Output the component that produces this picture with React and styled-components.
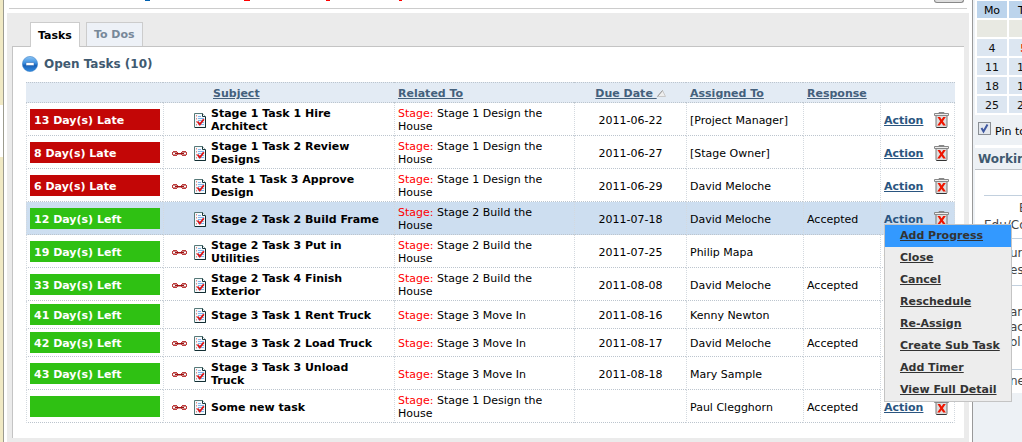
import React from "react";
import styled, { createGlobalStyle } from "styled-components";

const GlobalStyle = createGlobalStyle`
  * {
    box-sizing: border-box;
  }
  body {
    margin: 0;
    background: #ffffff;
    font-family: Verdana, "DejaVu Sans", sans-serif;
    font-size: 11px;
    line-height: 13px;
    color: #000000;
  }
`;

const StyledPage = styled.div`
  display: flex;
  min-height: 100vh;
  overflow: hidden;
`;

const StyledGutter = styled.div`
  display: flex;
  flex-direction: column;
  flex: none;
  width: 4px;
  border-right: 1px solid #9c9c90;
`;

const StyledGutterBlock = styled.div`
  height: ${({ $height }) => $height || "auto"};
  flex: ${({ $height }) => ($height ? "none" : "1")};
  background: ${({ $blank }) => ($blank ? "#ffffff" : "#f0e9c4")};
`;

const StyledMain = styled.main`
  flex: 1;
  min-width: 0;
`;

const StyledTopBar = styled.header`
  display: flex;
  justify-content: space-between;
  height: 9px;
  margin: 0 5px 4px;
  border-bottom: 1px solid #cccccc;
`;

const StyledMarks = styled.svg`
  width: 400px;
  height: 3px;
`;

const StyledTopButton = styled.button`
  width: 30px;
  height: 3px;
  margin-right: 3px;
  padding: 0;
  border: 1px solid #888888;
  border-top: none;
  border-radius: 0 0 3px 3px;
  background: #dddddd;
`;

const StyledFrame = styled.section`
  margin: 0 3px;
  padding: 9px 5px 4px;
  background: #ebebeb;
`;

const StyledTabs = styled.div`
  display: flex;
  gap: 6px;
  padding-left: 18px;
`;

const StyledTab = styled.button`
  height: ${({ $active }) => ($active ? "25px" : "24px")};
  margin-bottom: ${({ $active }) => ($active ? "-1px" : "0")};
  padding: 0 7px;
  border: 1px solid #cccccc;
  border-bottom: none;
  background: ${({ $active }) => ($active ? "#ffffff" : "#edf1f7")};
  color: ${({ $active }) => ($active ? "#000000" : "#778899")};
  font-family: inherit;
  font-size: 11px;
  font-weight: bold;
`;

const StyledPanel = styled.div`
  padding: 9px 9px 15px;
  border-top: 1px solid #c4c4c4;
  border-left: 1px solid #c4c4c4;
  background: #ffffff;
`;

const StyledPanelTitle = styled.h2`
  display: flex;
  align-items: center;
  gap: 6px;
  height: 16px;
  margin: 0 0 10px;
  color: #3f5a70;
  font-size: 12px;
  font-weight: bold;
`;

const StyledTableBox = styled.div`
  padding-left: 4px;
`;

const StyledTable = styled.table`
  width: 100%;
  table-layout: fixed;
  border-collapse: separate;
  border-spacing: 0;
`;

const StyledTh = styled.th`
  width: ${({ $width }) => $width || "auto"};
  height: 21px;
  padding: 2px 3px 0 ${({ $indent }) => $indent || "4px"};
  border-top: 1px dotted #bcc5ce;
  border-bottom: 1px dotted #bcc5ce;
  background: #e3ebf4;
  text-align: ${({ $align }) => $align || "left"};
  white-space: nowrap;
`;

const StyledSortLink = styled.a`
  color: #44607c;
  font-weight: bold;
`;

const StyledRow = styled.tr`
  background: ${({ $selected }) => ($selected ? "#cddef0" : "#ffffff")};
`;

const StyledTd = styled.td`
  padding: 4px 3px 2px;
  border-left: 1px dotted #d3d9df;
  border-bottom: 1px dotted #bcc5ce;
  text-align: ${({ $align }) => $align || "left"};
  vertical-align: middle;
  &:last-child {
    border-right: 1px dotted #d3d9df;
  }
`;

const StyledDaysTd = styled(StyledTd)`
  padding: 3px;
`;

const StyledRelatedTd = styled(StyledTd)`
  padding-right: 15px;
`;

const StyledDays = styled.div`
  width: 130px;
  height: 21px;
  padding: 2px 4px 0;
  background: ${({ $late }) => ($late ? "#c30606" : "#2fc113")};
  color: #ffffff;
  font-weight: bold;
  line-height: 19px;
`;

const StyledSubject = styled.div`
  display: flex;
  align-items: center;
  padding: 0 8px 0 5px;
  font-weight: bold;
`;

const StyledLinkSlot = styled.span`
  display: flex;
  flex: none;
  width: 22px;
`;

const StyledSubjectText = styled.span`
  flex: 1;
  padding-left: 5px;
`;

const StyledStage = styled.span`
  color: #ff0000;
`;

const StyledActions = styled.div`
  display: flex;
  align-items: center;
  gap: 11px;
`;

const StyledMenuAnchor = styled.div`
  position: relative;
`;

const StyledActionLink = styled.a`
  color: #2a5580;
  font-weight: bold;
`;

const StyledIconButton = styled.button`
  display: flex;
  flex: none;
  padding: 0;
  border: none;
  background: none;
`;

const StyledMenu = styled.div`
  position: absolute;
  top: 11px;
  left: 0;
  z-index: 5;
  width: 128px;
  border: 1px solid #c4c4c4;
  background: #ededed;
`;

const StyledMenuItem = styled.a`
  display: block;
  padding-left: 15px;
  background: ${({ $active }) => ($active ? "#3399ff" : "transparent")};
  color: #333333;
  font-weight: bold;
  line-height: 22px;
  white-space: nowrap;
`;

const StyledSidebar = styled.aside`
  flex: none;
  width: 50px;
  padding-left: 2px;
  border-left: 1px solid #999999;
  background: #edf1f5;
  overflow: hidden;
  white-space: nowrap;
`;

const StyledCalendar = styled.table`
  width: 66px;
  margin-top: -1px;
  table-layout: fixed;
  border-spacing: 2px;
  background: #ffffff;
  text-align: center;
`;

const StyledDay = styled.td`
  height: 17px;
  padding: 2px 0 0;
  background: ${({ $empty }) => ($empty ? "#e8e9e2" : "#dce6f1")};
  color: ${({ $today }) => ($today ? "#ff0000" : "#111111")};
  font-weight: ${({ $today }) => ($today ? "bold" : "normal")};
`;

const StyledDayName = styled.th`
  height: 17px;
  padding: 2px 0 0;
  background: #bcd4ec;
  font-weight: normal;
`;

const StyledPin = styled.label`
  display: flex;
  align-items: center;
  gap: 4px;
  height: 30px;
  padding: 3px 0 0 3px;
`;

const StyledPinBox = styled.input`
  appearance: none;
  flex: none;
  width: 13px;
  height: 13px;
  margin: 0 0 6px;
  border: 1px solid #8a8f94;
  background: #e4e8ee
    url("data:image/svg+xml,%3Csvg xmlns='http://www.w3.org/2000/svg' viewBox='0 0 11 11'%3E%3Cpath d='M2.5 5l2 3.5 4-7' fill='none' stroke='%233f58a0' stroke-width='2'/%3E%3C/svg%3E");
`;

const StyledSideTitle = styled.h3`
  height: 25px;
  margin: 0;
  padding-left: 3px;
  border-top: 3px solid #ffffff;
  border-bottom: 1px solid #bfc3c8;
  color: #3f5a70;
  font-size: 12px;
  font-weight: bold;
  line-height: 22px;
`;

const StyledSideList = styled.div`
  padding-left: 9px;
  background: #ffffff;
  font-size: 12px;
`;

const StyledSideGroup = styled.div`
  display: flex;
  flex-direction: column;
  justify-content: center;
  gap: ${({ $gap }) => $gap || "0"};
  height: ${({ $height }) => $height};
  border-top: ${({ $first }) => ($first ? "none" : "1px solid #c2d0de")};
  color: #444444;
`;

const StyledSideLine = styled.span`
  padding-left: ${({ $indent }) => $indent || "0"};
`;

const CollapseIcon = () => (
  <svg width="16" height="16" viewBox="0 0 16 16">
    <defs>
      <linearGradient id="ball" x1="0" y1="0" x2="0" y2="1">
        <stop offset="0" stopColor="#8cc4f4" />
        <stop offset="0.45" stopColor="#3b8fe0" />
        <stop offset="0.6" stopColor="#1a62b8" />
        <stop offset="1" stopColor="#2f8ae0" />
      </linearGradient>
    </defs>
    <circle cx="8" cy="8" r="7.6" fill="url(#ball)" stroke="#3c82c8" strokeWidth="0.6" />
    <rect x="4" y="6.5" width="8" height="3" rx="0.5" fill="#ffffff" stroke="#245fa5" strokeWidth="0.5" />
  </svg>
);

const ChainIcon = () => (
  <svg width="15" height="5" viewBox="0 0 15 5">
    <path d="M1 0h4v1H1zM0 1h1v3H0zM5 1h1v3H5zM1 4h4v1H1zM10 0h4v1h-4zM9 1h1v3H9zM14 1h1v3h-1zM10 4h4v1h-4z" fill="#bf3a3a" />
    <path d="M1 1h4v1H1zM1 3h4v1H1zM10 1h4v1h-4zM10 3h4v1h-4z" fill="#c98c8c" />
    <path d="M1 2h2v1H1zM12 2h2v1h-2z" fill="#ffffff" />
    <path d="M3 2h9v1H3z" fill="#a01010" />
    <path d="M6 3h3v1H6z" fill="#d59a9a" />
  </svg>
);

const TaskIcon = () => (
  <svg width="12" height="15" viewBox="0 0 12 15">
    <path d="M0.5 0.5h8l3 3v11h-11z" fill="#f4fafc" stroke="#567878" />
    <path d="M11.5 4v10.5H1" fill="none" stroke="#122d32" />
    <path d="M8.5 0.5v3h3" fill="#ffffff" stroke="#17353a" />
    <path d="M4 3.5h3M4 5.5h6M4 7.5h6M4 9.5h6M4 11.5h6" stroke="#82b4ee" />
    <path d="M2.5 2v1.5M2.5 5v1.5M2.5 8v1.5M2.5 11v1.5" stroke="#e58a8a" />
    <path d="M3.5 8.5l2.3 3L9.8 6.2" fill="none" stroke="#e01212" strokeWidth="1.8" />
  </svg>
);

const TrashIcon = () => (
  <svg width="15" height="16" viewBox="0 0 15 16">
    <path d="M5 2.5v-2h5v2" fill="none" stroke="#888888" />
    <path d="M2 4v10.5q0 1 1 1h9q1 0 1-1V4" fill="#dedede" stroke="#777777" />
    <path d="M0.5 1.5h14v2h-14z" fill="#eeeeee" stroke="#888888" />
    <path d="M2.5 15.5h10" stroke="#333333" />
    <path d="M3.5 5h2.6l1.5 2.4L9.2 5h2.6L8.9 9.3l3 4.2H9.2L7.5 11l-1.7 2.5H3.2l3-4.2z" fill="#ee1500" />
  </svg>
);

const SortIcon = () => (
  <svg width="9" height="7" viewBox="0 0 9 7">
    <path d="M0.5 6.5L5.5 0.5L8.5 6.5z" fill="#eeeeee" stroke="#c8c8c8" />
    <path d="M0.5 6.5L5.5 0.5" stroke="#999999" />
  </svg>
);

const tasks = [
  { days: "13 Day(s) Late", late: true, subject: "Stage 1 Task 1 Hire Architect", related: "Stage 1 Design the House", due: "2011-06-22", assigned: "[Project Manager]" },
  { days: "8 Day(s) Late", late: true, linked: true, subject: "Stage 1 Task 2 Review Designs", related: "Stage 1 Design the House", due: "2011-06-27", assigned: "[Stage Owner]" },
  { days: "6 Day(s) Late", late: true, linked: true, subject: "State 1 Task 3 Approve Design", related: "Stage 1 Design the House", due: "2011-06-29", assigned: "David Meloche" },
  { days: "12 Day(s) Left", subject: "Stage 2 Task 2 Build Frame", related: "Stage 2 Build the House", due: "2011-07-18", assigned: "David Meloche", response: "Accepted", selected: true },
  { days: "19 Day(s) Left", linked: true, subject: "Stage 2 Task 3 Put in Utilities", related: "Stage 2 Build the House", due: "2011-07-25", assigned: "Philip Mapa" },
  { days: "33 Day(s) Left", linked: true, subject: "Stage 2 Task 4 Finish Exterior", related: "Stage 2 Build the House", due: "2011-08-08", assigned: "David Meloche", response: "Accepted" },
  { days: "41 Day(s) Left", subject: "Stage 3 Task 1 Rent Truck", related: "Stage 3 Move In", due: "2011-08-16", assigned: "Kenny Newton" },
  { days: "42 Day(s) Left", linked: true, subject: "Stage 3 Task 2 Load Truck", related: "Stage 3 Move In", due: "2011-08-17", assigned: "David Meloche", response: "Accepted" },
  { days: "43 Day(s) Left", linked: true, subject: "Stage 3 Task 3 Unload Truck", related: "Stage 3 Move In", due: "2011-08-18", assigned: "Mary Sample" },
  { days: "", linked: true, subject: "Some new task", related: "Stage 1 Design the House", due: "", assigned: "Paul Clegghorn", response: "Accepted" },
];

const menuItems = ["Add Progress", "Close", "Cancel", "Reschedule", "Re-Assign", "Create Sub Task", "Add Timer", "View Full Detail"];

const weeks = [
  ["", ""],
  ["4", "5"],
  ["11", "12"],
  ["18", "19"],
  ["25", "26"],
];

const TaskRow = ({ task }) => (
  <StyledRow $selected={task.selected}>
    <StyledDaysTd>
      <StyledDays $late={task.late}>{task.days}</StyledDays>
    </StyledDaysTd>
    <StyledTd>
      <StyledSubject>
        <StyledLinkSlot>{task.linked && <ChainIcon />}</StyledLinkSlot>
        <TaskIcon />
        <StyledSubjectText>{task.subject}</StyledSubjectText>
      </StyledSubject>
    </StyledTd>
    <StyledRelatedTd>
      <StyledStage>Stage:</StyledStage> {task.related}
    </StyledRelatedTd>
    <StyledTd $align="center">{task.due}</StyledTd>
    <StyledTd>{task.assigned}</StyledTd>
    <StyledTd>{task.response}</StyledTd>
    <StyledTd>
      <StyledActions>
        <StyledMenuAnchor>
          <StyledActionLink href="#action">Action</StyledActionLink>
          {task.selected && (
            <StyledMenu>
              {menuItems.map((item, i) => (
                <StyledMenuItem key={item} href="#menu" $active={i === 0}>
                  {item}
                </StyledMenuItem>
              ))}
            </StyledMenu>
          )}
        </StyledMenuAnchor>
        <StyledIconButton type="button" aria-label="Delete">
          <TrashIcon />
        </StyledIconButton>
      </StyledActions>
    </StyledTd>
  </StyledRow>
);

const Sidebar = () => (
  <StyledSidebar>
    <StyledCalendar>
      <thead>
        <tr>
          {["Mo", "Tu"].map((day) => (
            <StyledDayName key={day}>{day}</StyledDayName>
          ))}
        </tr>
      </thead>
      <tbody>
        {weeks.map((week, i) => (
          <tr key={i}>
            {week.map((day, j) => (
              <StyledDay key={j} $empty={!day} $today={day === "5"}>
                {day}
              </StyledDay>
            ))}
          </tr>
        ))}
      </tbody>
    </StyledCalendar>
    <StyledPin htmlFor="pin">
      <StyledPinBox type="checkbox" id="pin" defaultChecked />
      Pin to
    </StyledPin>
    <StyledSideTitle>Working</StyledSideTitle>
    <StyledSideList>
      <StyledSideGroup $height="25px" $first />
      <StyledSideGroup $height="43px" $gap="4px">
        <StyledSideLine $indent="35px">B</StyledSideLine>
        <StyledSideLine>Edu/Co</StyledSideLine>
      </StyledSideGroup>
      <StyledSideGroup $height="47px" $gap="4px">
        <StyledSideLine $indent="26px">un</StyledSideLine>
        <StyledSideLine $indent="26px">es</StyledSideLine>
      </StyledSideGroup>
      <StyledSideGroup $height="84px" $gap="2px">
        <StyledSideLine $indent="26px">an</StyledSideLine>
        <StyledSideLine $indent="26px">ac</StyledSideLine>
        <StyledSideLine $indent="26px">ol</StyledSideLine>
      </StyledSideGroup>
      <StyledSideGroup $height="24px">
        <StyledSideLine $indent="26px">ne</StyledSideLine>
      </StyledSideGroup>
    </StyledSideList>
  </StyledSidebar>
);

const App = () => {
  return (
    <>
      <GlobalStyle />
      <StyledPage>
        <StyledGutter>
          <StyledGutterBlock $height="105px" />
          <StyledGutterBlock $height="52px" $blank />
          <StyledGutterBlock />
        </StyledGutter>
        <StyledMain>
          <StyledTopBar>
            <StyledMarks viewBox="0 0 400 3">
              <path d="M136 0h5v1h-5z" fill="#0060b0" />
              <path d="M235 0h6v1h-6zM317 0h4v1h-4zM390 0h3v1h-3z" fill="#ff0000" />
            </StyledMarks>
            <StyledTopButton type="button" aria-label="Options" />
          </StyledTopBar>
          <StyledFrame>
            <StyledTabs>
              <StyledTab type="button" $active>
                Tasks
              </StyledTab>
              <StyledTab type="button">To Dos</StyledTab>
            </StyledTabs>
            <StyledPanel>
              <StyledPanelTitle>
                <CollapseIcon />
                Open Tasks (10)
              </StyledPanelTitle>
              <StyledTableBox>
                <StyledTable>
                  <thead>
                    <tr>
                      <StyledTh $width="137px" />
                      <StyledTh $indent="50px">
                        <StyledSortLink href="#subject">Subject</StyledSortLink>
                      </StyledTh>
                      <StyledTh $width="180px">
                        <StyledSortLink href="#related">Related To</StyledSortLink>
                      </StyledTh>
                      <StyledTh $width="112px" $align="center">
                        <StyledSortLink href="#due">
                          Due Date <SortIcon />
                        </StyledSortLink>
                      </StyledTh>
                      <StyledTh $width="117px">
                        <StyledSortLink href="#assigned">Assigned To</StyledSortLink>
                      </StyledTh>
                      <StyledTh $width="77px">
                        <StyledSortLink href="#response">Response</StyledSortLink>
                      </StyledTh>
                      <StyledTh $width="75px" />
                    </tr>
                  </thead>
                  <tbody>
                    {tasks.map((task) => (
                      <TaskRow key={task.subject} task={task} />
                    ))}
                  </tbody>
                </StyledTable>
              </StyledTableBox>
            </StyledPanel>
          </StyledFrame>
        </StyledMain>
        <Sidebar />
      </StyledPage>
    </>
  );
};

export default App;
